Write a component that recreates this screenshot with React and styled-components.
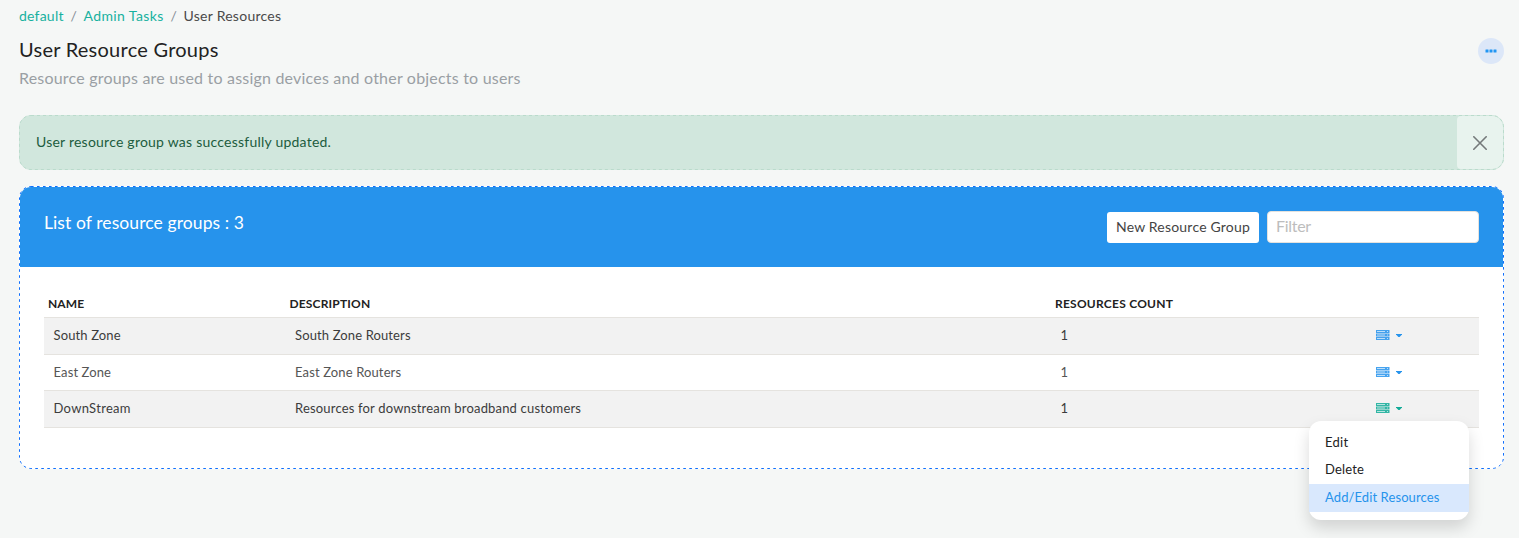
import React from 'react';
import styled, { createGlobalStyle } from 'styled-components';

const Global = createGlobalStyle`
  * { box-sizing: border-box; }
  body {
    margin: 0;
    background: #f5f7f6;
    color: #444;
    font: 400 14px/21px Lato, "Open Sans", sans-serif;
    overflow: hidden;
  }
`;

const Page = styled.main`
  width: 100%;
  min-height: 538px;
  padding: 5px 15px 0 19px;
`;

const T = styled.span`
  letter-spacing: ${(p) => p.$track || 0}px;
  white-space: nowrap;
`;

const Breadcrumb = styled.nav`
  display: flex;
  height: 21px;
`;

const Crumb = styled.a`
  color: ${(p) => (p.$current ? '#4a4a4a' : '#17b19f')};
  letter-spacing: ${(p) => p.$track}px;
`;

const Slash = styled.span`
  width: 19.8px;
  text-align: center;
  color: #868e96;
`;

const Heading = styled.header`
  display: flex;
  justify-content: space-between;
  height: 73px;
  margin-bottom: 16px;
  padding-top: 10px;
`;

const Title = styled.h1`
  margin: 0;
  font-size: 20px;
  line-height: 26px;
  font-weight: 400;
  letter-spacing: 0.25px;
  color: #222;
`;

const Subtitle = styled.p`
  margin: 4px 0 0;
  font-size: 16px;
  line-height: 24px;
  letter-spacing: 0.2px;
  color: #9a9fa4;
`;

const MoreButton = styled.button`
  display: flex;
  align-items: center;
  justify-content: center;
  width: 26px;
  height: 26px;
  margin-top: 2px;
  padding: 0;
  border: 0;
  border-radius: 50%;
  background: #dce7f8;
`;

const Outline = styled.svg`
  position: absolute;
  inset: -1px;
  width: calc(100% + 2px);
  height: calc(100% + 2px);
  pointer-events: none;
  fill: none;
  stroke: ${(p) => p.$color};
  stroke-dasharray: ${(p) => p.$dash};
  rect {
    x: 0.5px;
    y: 0.5px;
    width: calc(100% - 1px);
    height: calc(100% - 1px);
    rx: 11.5px;
  }
`;

const Alert = styled.div`
  position: relative;
  display: flex;
  justify-content: space-between;
  align-items: stretch;
  height: 55px;
  margin-bottom: 16px;
  padding-left: 16px;
  border: 1px solid #d1e7dd;
  border-radius: 12px;
  background: #d1e7dd;
  color: #1c5c3e;
  line-height: 51px;
`;

const CloseButton = styled.button`
  display: flex;
  align-items: center;
  justify-content: center;
  width: 46px;
  padding: 0;
  border: 0;
  border-radius: 4px 11px 11px 4px;
  background: #e8f3ee;
`;

const Card = styled.section`
  position: relative;
  height: 283px;
  border: 1px solid #fff;
  border-radius: 12px;
  background: #fff;
`;

const CardHeader = styled.div`
  display: flex;
  height: 80px;
  padding: 24px 24px 0;
  border-radius: 11px 11px 0 0;
  background: #2693ec;
`;

const CardTitle = styled.h2`
  flex: 1;
  margin: 0;
  font-size: 17.5px;
  line-height: 24px;
  font-weight: 400;
  letter-spacing: 0.09px;
  color: #fff;
`;

const NewButton = styled.button`
  width: 152px;
  height: 31px;
  margin: 1px 8px 0 0;
  padding: 0 0 2px;
  border: 0;
  border-radius: 3px;
  background: #fff;
  color: #444;
  font: 400 14px/29px Lato, sans-serif;
  letter-spacing: 0.2px;
`;

const FilterInput = styled.input`
  width: 212px;
  height: 32px;
  padding: 0 8px 3px;
  border: 1px solid #e4e2de;
  border-radius: 4px;
  background: #fff;
  font: 400 16px/26px Lato, sans-serif;
  letter-spacing: -0.3px;
  &::placeholder { color: #bdbdbd; opacity: 1; }
`;

const Table = styled.div`
  padding: 24px 24px 0;
`;

const columns = '241.5px 765.5px 315px 1fr';

const HeadRow = styled.div`
  display: grid;
  grid-template-columns: ${columns};
  height: 26px;
  padding-left: 4px;
  font-size: 12px;
  line-height: 26px;
  font-weight: 700;
  color: #222;
`;

const Row = styled.div`
  display: grid;
  grid-template-columns: ${columns};
  height: ${(p) => p.$height}px;
  padding-left: 9.5px;
  border-top: 1px solid #e5e3df;
  background: ${(p) => (p.$striped ? '#f2f2f2' : '#fff')};
  color: ${(p) => (p.$striped ? '#3c3c3c' : '#555')};
  font-size: 13px;
  line-height: 35px;
  &:last-child { border-bottom: 1px solid #e5e3df; }
`;

const ActionButton = styled.button`
  display: flex;
  align-items: center;
  gap: 6px;
  height: 34px;
  padding: 0;
  border: 0;
  background: none;
  color: ${(p) => (p.$open ? '#12ab98' : '#2693ec')};
`;

const Menu = styled.div`
  position: absolute;
  left: 1309px;
  top: 421px;
  width: 160px;
  height: 99px;
  padding-top: 8px;
  border-radius: 12px;
  background: #fff;
  box-shadow: 0 8px 16px rgba(0, 0, 0, 0.15);
`;

const MenuItem = styled.div`
  height: ${(p) => (p.$active ? 28 : 27.5)}px;
  padding-left: 16px;
  line-height: ${(p) => p.$line || 27}px;
  font-size: 13px;
  letter-spacing: ${(p) => p.$track}px;
  background: ${(p) => (p.$active ? '#d9e8fd' : 'transparent')};
  color: ${(p) => (p.$active ? '#2693ec' : '#222')};
`;

const ServerIcon = () => (
  <svg width="14" height="10" viewBox="0 0 14 10" fill="currentColor">
    {[0, 3.5, 7].map((y) => (
      <g key={y}>
        <rect y={y} width="13.5" height="3" fillOpacity=".85" />
        <rect x="1" y={y + 1} width="8" height="1" fill="#fff" fillOpacity=".65" />
        <rect x="11" y={y + 1} width="1" height="1" fill="#fff" fillOpacity=".65" />
      </g>
    ))}
  </svg>
);

const Caret = () => (
  <svg width="6" height="3" viewBox="0 0 6 3" fill="currentColor">
    <path d="M0 0h6v.6L3.6 3H2.4L0 .6z" />
  </svg>
);

const rows = [
  { name: 'South Zone', nt: 0.13, desc: 'South Zone Routers', dt: 0.13, height: 37 },
  { name: 'East Zone', nt: 0.12, desc: 'East Zone Routers', dt: 0.13, height: 36 },
  { name: 'DownStream', nt: 0.3, desc: 'Resources for downstream broadband customers', dt: 0.18, height: 38, open: true },
];

export default function App() {
  return (
    <Page>
      <Global />
      <Breadcrumb>
        <Crumb $track={0.22}>default</Crumb>
        <Slash>/</Slash>
        <Crumb $track={0.4}>Admin Tasks</Crumb>
        <Slash>/</Slash>
        <Crumb $current $track={0.26}>User Resources</Crumb>
      </Breadcrumb>
      <Heading>
        <div>
          <Title>User Resource Groups</Title>
          <Subtitle>Resource groups are used to assign devices and other objects to users</Subtitle>
        </div>
        <MoreButton aria-label="More">
          <svg width="12" height="4" viewBox="0 0 12 4" fill="#2196f3">
            <rect x="0.5" y="0.5" width="3" height="3" rx=".3" />
            <rect x="4.5" y="0.5" width="3" height="3" rx=".3" />
            <rect x="8.5" y="0.5" width="3" height="3" rx=".3" />
          </svg>
        </MoreButton>
      </Heading>
      <Alert>
        <T $track={0.23}>User resource group was successfully updated.</T>
        <CloseButton aria-label="Close">
          <svg width="14" height="14" viewBox="0 0 14 14" stroke="#74797a" strokeWidth="1.6" strokeLinecap="round">
            <path d="M.8.8l12.4 12.4M13.2.8L.8 13.2" />
          </svg>
        </CloseButton>
        <Outline $color="#badbcc" $dash="3 3"><rect /></Outline>
      </Alert>
      <Card>
        <CardHeader>
          <CardTitle>List of resource groups : 3</CardTitle>
          <NewButton>New Resource Group</NewButton>
          <FilterInput placeholder="Filter" />
        </CardHeader>
        <Table>
          <HeadRow>
            <T $track={0.1}>NAME</T>
            <T $track={0.17}>DESCRIPTION</T>
            <T $track={0.24}>RESOURCES COUNT</T>
          </HeadRow>
          {rows.map((r, i) => (
            <Row key={r.name} $striped={i % 2 === 0} $height={r.height}>
              <T $track={r.nt}>{r.name}</T>
              <T $track={r.dt}>{r.desc}</T>
              <T>1</T>
              <ActionButton $open={r.open} aria-label="Actions">
                <ServerIcon />
                <Caret />
              </ActionButton>
            </Row>
          ))}
        </Table>
        <Outline $color="#0d6efd" $dash="2.6 3.4"><rect /></Outline>
      </Card>
      <Menu>
        <MenuItem $track={0.25}>Edit</MenuItem>
        <MenuItem $track={0.15} $line={25}>Delete</MenuItem>
        <MenuItem $active $track={0.1}>Add/Edit Resources</MenuItem>
      </Menu>
    </Page>
  );
}
